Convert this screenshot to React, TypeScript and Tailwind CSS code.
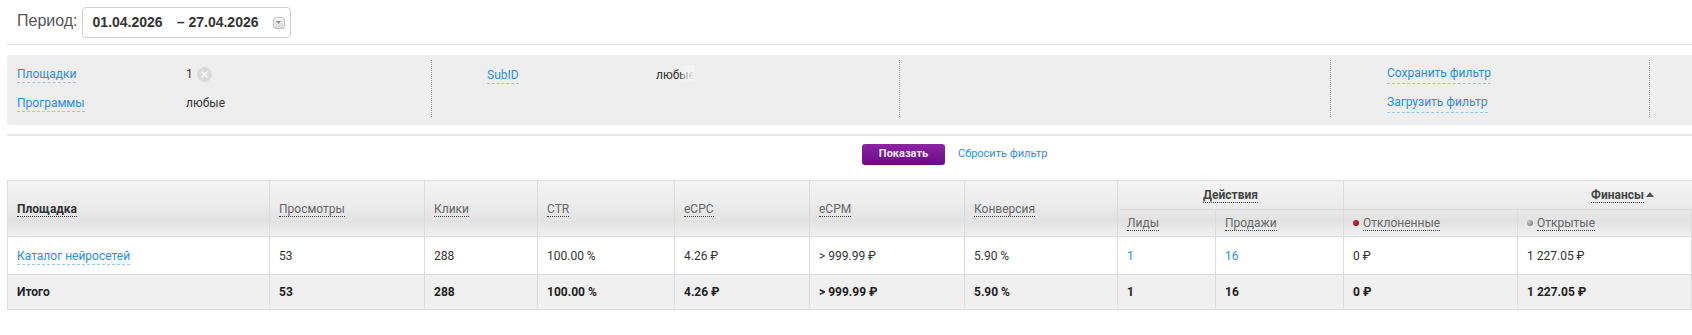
import React from "react";

const roboto = "font-['Roboto',sans-serif]";
const arial = "font-['Liberation_Sans',Arial,sans-serif]";
const link = "border-b border-dashed border-[#9cc6ef] pb-[1px] text-[#2f8de4]";

const cols = [
  "w-[262px]",
  "w-[155px]",
  "w-[113px]",
  "w-[137px]",
  "w-[135px]",
  "w-[155px]",
  "w-[153px]",
  "w-[98px]",
  "w-[128px]",
  "w-[174px]",
  "w-[174px]",
  "w-[210px]",
];

const plain = ["Просмотры", "Клики", "CTR", "eCPC", "eCPM", "Конверсия"];

const row = ["53", "288", "100.00 %", "4.26 ₽", "> 999.99 ₽", "5.90 %"];

function DateRange() {
  return (
    <div className="ml-[4px] mt-[7px] flex h-[31px] w-[209px] items-center rounded-[4px] border border-[#cfcfcf] bg-white pl-[10px]">
      <span className={`${arial} text-[14px] font-bold text-[#333]`}>01.04.2026</span>
      <span className={`${arial} ml-[14px] text-[14px] font-bold text-[#333]`}>–</span>
      <span className={`${arial} ml-[4px] text-[14px] font-bold text-[#333]`}>27.04.2026</span>
      {/* dropdown toggle */}
      <span className="ml-[14px] flex h-[12px] w-[12px] items-center justify-center rounded-[3px] border border-[#c4c4c4] bg-gradient-to-b from-[#f6f6f6] to-[#d9d9d9]">
        <svg width="5" height="3" viewBox="0 0 5 3">
          <path d="M0 0h5L2.5 3z" fill="#8a8a8a" />
        </svg>
      </span>
    </div>
  );
}

function ClearIcon() {
  return (
    <span className="ml-[4px] flex h-[15px] w-[15px] items-center justify-center rounded-full bg-[#dadada]">
      <svg width="7" height="7" viewBox="0 0 7 7">
        <path d="M1 1l5 5M6 1l-5 5" stroke="#fff" strokeWidth="1.4" strokeLinecap="round" />
      </svg>
    </span>
  );
}

function FilterPanel() {
  return (
    <div className={`${roboto} ml-[7px] mt-[10px] flex h-[70px] rounded-l-[3px] bg-[#eeeeee] pb-[8px] pt-[5px] text-[12px]`}>
      <div className="flex w-[424px] flex-col pl-[10px]">
        <div className="flex h-[29px] items-center">
          <span className="w-[169px]">
            <span className={link}>Площадки</span>
          </span>
          <span className="flex items-center text-[#333]">
            1
            <ClearIcon />
          </span>
        </div>
        <div className="flex h-[29px] items-center">
          <span className="w-[169px]">
            <span className={link}>Программы</span>
          </span>
          <span className="text-[#333]">любые</span>
        </div>
      </div>
      <div className="flex w-[468px] flex-col border-l border-dotted border-[#a5a5a5] pl-[55px]">
        <div className="flex h-[29px] items-center">
          <span className="w-[169px]">
            <span className={link}>SubID</span>
          </span>
          <span className="relative inline-block text-[#333]">
            любые
            <span className="absolute right-0 top-[-1px] h-[17px] w-[14px] bg-[linear-gradient(to_right,rgba(244,244,244,0.35),#f4f4f4)]" />
          </span>
        </div>
      </div>
      <div className="w-[431px] border-l border-dotted border-[#a5a5a5]" />
      <div className="flex w-[319px] flex-col border-l border-dotted border-[#a5a5a5] pl-[56px]">
        <div className="flex h-[29px] items-center">
          <span className={link}>Сохранить фильтр</span>
        </div>
        <div className="flex h-[29px] items-center">
          <span className={link}>Загрузить фильтр</span>
        </div>
      </div>
      <div className="flex-1 border-l border-dotted border-[#a5a5a5]" />
    </div>
  );
}

function Dot({ color }: { color: string }) {
  return <span className={`mr-[4px] inline-block h-[6px] w-[6px] rounded-full align-[1px] ${color}`} />;
}

function StatsTable() {
  const cell = "border border-[#dcdcdc] px-[9px]";
  const th = `${cell} text-left font-normal`;
  const td = `${cell} text-left`;
  const group = `${cell} text-center font-bold text-[#444]`;
  return (
    <div className="ml-[7px] mt-[15px] overflow-hidden">
      <table className={`${roboto} w-[1894px] table-fixed border-collapse text-[12px]`}>
        <colgroup>
          {cols.map((c, i) => (
            <col key={i} className={c} />
          ))}
        </colgroup>
        <thead className="bg-[linear-gradient(to_bottom,#f4f4f4_0%,#ececec_40%,#e2e2e2_72%,#f1f1f1_100%)]">
          <tr className="h-[29px]">
            <th rowSpan={2} className={`${cell} text-left font-bold text-[#333]`}>
              <span className="border-b border-dotted border-[#333]">Площадка</span>
            </th>
            {plain.map((h) => (
              <th key={h} rowSpan={2} className={`${th} text-[#666]`}>
                <span className="border-b border-dotted border-[#444]">{h}</span>
              </th>
            ))}
            <th colSpan={2} className={group}>
              <span className="border-b border-dotted border-[#444]">Действия</span>
            </th>
            <th colSpan={3} className={group}>
              <span className="border-b border-dotted border-[#444]">Финансы</span>
              <svg className="ml-[2px] inline-block align-[2px]" width="8" height="5" viewBox="0 0 8 5">
                <path d="M0 5L4 0l4 5z" fill="#555" />
              </svg>
            </th>
          </tr>
          <tr className="h-[27px] text-[#666]">
            <th className={th}>
              <span className="border-b border-dotted border-[#444]">Лиды</span>
            </th>
            <th className={th}>
              <span className="border-b border-dotted border-[#444]">Продажи</span>
            </th>
            <th className={th}>
              <Dot color="bg-[radial-gradient(circle_at_35%_35%,#d02a35,#8e0d17)]" />
              <span className="border-b border-dotted border-[#444]">Отклоненные</span>
            </th>
            <th className={th}>
              <Dot color="bg-[radial-gradient(circle_at_35%_35%,#c8c8c8,#6f6f6f)]" />
              <span className="border-b border-dotted border-[#444]">Открытые</span>
            </th>
            {/* column past the right edge of the window */}
            <th className={th} />
          </tr>
        </thead>
        <tbody>
          <tr className="h-[38px] bg-white text-[#333]">
            <td className={td}>
              <span className={link}>Каталог нейросетей</span>
            </td>
            {row.map((v, i) => (
              <td key={i} className={td}>
                {v}
              </td>
            ))}
            <td className={`${td} text-[#2f8de4]`}>1</td>
            <td className={`${td} text-[#2f8de4]`}>16</td>
            <td className={td}>0 ₽</td>
            <td className={td}>1 227.05 ₽</td>
            <td className={td} />
          </tr>
          <tr className="h-[35px] bg-[#f0f0f0] font-bold text-[#222]">
            <td className={td}>Итого</td>
            {row.map((v, i) => (
              <td key={i} className={td}>
                {v}
              </td>
            ))}
            <td className={td}>1</td>
            <td className={td}>16</td>
            <td className={td}>0 ₽</td>
            <td className={td}>1 227.05 ₽</td>
            <td className={td} />
          </tr>
        </tbody>
      </table>
    </div>
  );
}

export default function App() {
  return (
    <div className="h-[335px] w-[1692px] overflow-hidden bg-white">
      {/* Period */}
      <div className="ml-[7px] flex h-[45px] items-start border-b border-[#e1e1e1]">
        <span className={`${arial} ml-[10px] mt-[12px] text-[16px] leading-[18px] text-[#555]`}>Период:</span>
        <DateRange />
      </div>

      {/* Filters */}
      <FilterPanel />
      <div className="ml-[7px] mt-[9px] border-t-2 border-[#e6e6e6]" />

      {/* Actions */}
      <div className={`${roboto} mt-[8px] flex items-center gap-[13px] pl-[862px]`}>
        <button className="h-[21px] w-[83px] rounded-[3px] bg-gradient-to-b from-[#8d23a5] to-[#680c82] text-[11px] font-bold text-[#f5e9f8]">
          Показать
        </button>
        <span className="text-[11px] text-[#2f8de4]">Сбросить фильтр</span>
      </div>

      {/* Table */}
      <StatsTable />
    </div>
  );
}
